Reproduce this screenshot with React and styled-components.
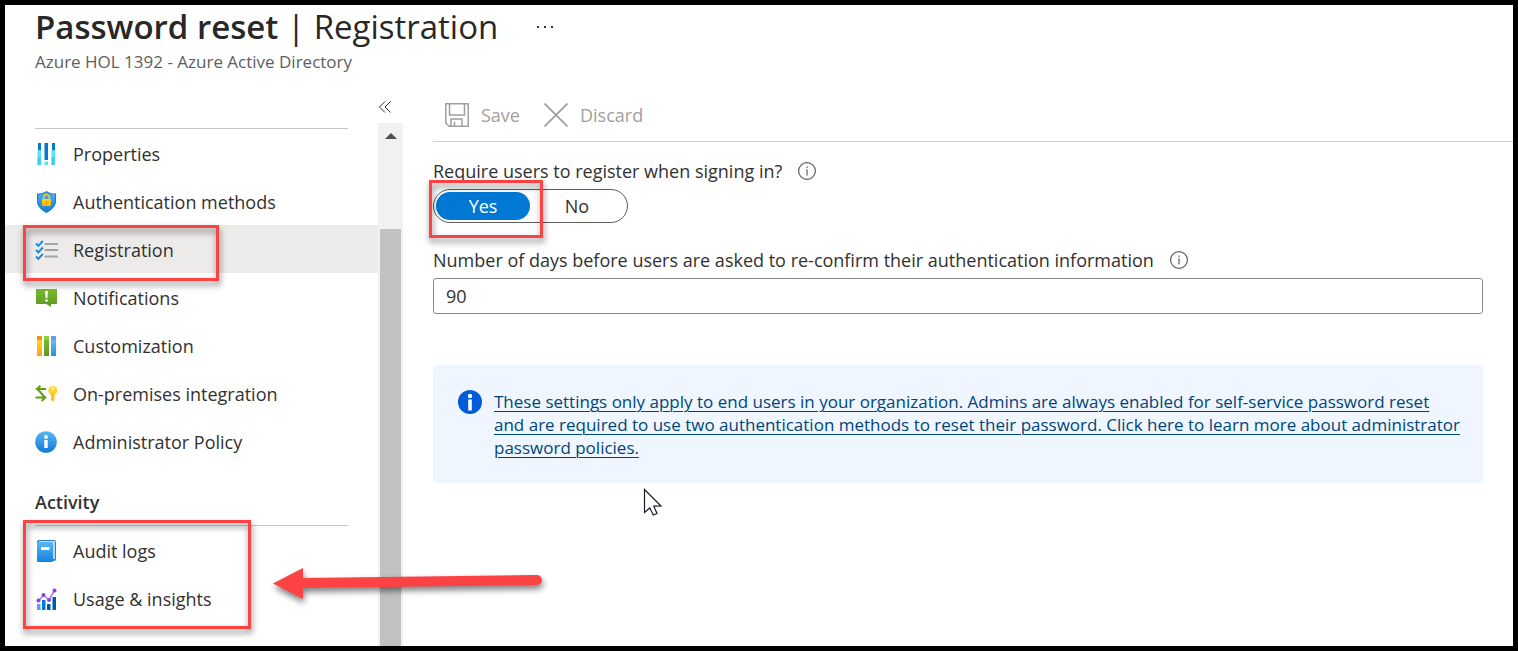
import React, { useState } from "react";
import styled, { createGlobalStyle, css } from "styled-components";

const GlobalStyle = createGlobalStyle`
  *, *::before, *::after { box-sizing: border-box; }
  body {
    margin: 0;
    background: #fff;
    color: #323130;
    font-family: "Open Sans", "Noto Sans", sans-serif;
    font-size: 18px;
    line-height: 24px;
  }
  button, input { font: inherit; color: inherit; }
  svg { display: block; flex: none; }
`;

const Frame = styled.div`
  display: flex;
  flex-direction: column;
  min-height: 100vh;
  border: 5px solid #000;
  overflow: hidden;
`;

const Header = styled.header`
  padding: 0 30px;
  height: 88px;
`;

const TitleRow = styled.div`
  display: flex;
  align-items: center;
  gap: 38px;
  height: 44px;
`;

const Title = styled.h1`
  margin: 0;
  font-size: 33px;
  line-height: 44px;
  font-weight: 400;
  color: #292827;
  white-space: nowrap;

  strong { font-weight: 600; }
`;

const MoreButton = styled.button`
  padding: 0;
  border: 0;
  background: none;
  cursor: pointer;
`;

const Subtitle = styled.p`
  margin: 0;
  font-size: 17px;
  line-height: 26px;
  color: #605e5c;
`;

const Body = styled.div`
  display: flex;
  flex: 1;
`;

const Sidebar = styled.nav`
  display: flex;
  flex: none;
  width: 398px;
`;

const Menu = styled.div`
  flex: 1;
  padding-top: 35px;
`;

const Rule = styled.hr`
  margin: 0 30px;
  border: 0;
  border-top: 1px solid #c8c6c4;
`;

const NavList = styled.ul`
  position: relative;
  margin: 0;
  padding: 0;
  list-style: none;
`;

const NavItem = styled.li`
  position: relative;
`;

const NavLink = styled.a`
  display: flex;
  align-items: center;
  gap: 15px;
  height: 48px;
  padding: 2px 30px 0;
  color: #323130;
  text-decoration: none;
  white-space: nowrap;
  background: ${(p) => (p.$active ? "#edebe9" : "transparent")};
`;

const GroupTitle = styled.h2`
  margin: 0;
  padding: 25px 30px 11px;
  font-size: 18px;
  line-height: 24px;
  font-weight: 600;
`;

const ScrollColumn = styled.div`
  display: flex;
  flex-direction: column;
  width: 25px;
`;

const CollapseButton = styled.button`
  display: flex;
  align-items: center;
  height: 30px;
  padding: 0 0 2px;
  border: 0;
  background: none;
  cursor: pointer;
`;

const Track = styled.div`
  display: flex;
  flex: 1;
  flex-direction: column;
  align-items: center;
  gap: 90px;
  padding: 10px 2px 0;
  background: #f1f1f1;
`;

const Thumb = styled.div`
  flex: 1;
  align-self: stretch;
  background: #c1c1c1;
`;

const Main = styled.main`
  flex: 1;
  min-width: 0;
  padding-left: 30px;
`;

const Toolbar = styled.div`
  display: flex;
  align-items: center;
  gap: 24px;
  height: 49px;
  padding: 0 12px 4px;
  border-bottom: 1px solid #d2d0ce;
`;

const ToolButton = styled.button`
  display: flex;
  align-items: center;
  gap: 12px;
  padding: 0;
  border: 0;
  background: none;
  &:disabled { color: #a19f9d; }
`;

const Form = styled.form`
  padding: 17px 30px 0 0;
`;

const LabelRow = styled.div`
  display: flex;
  align-items: center;
  gap: 16px;
  height: 24px;
  white-space: nowrap;
`;

const Toggle = styled.div`
  position: relative;
  display: flex;
  width: 195px;
  height: 34px;
  margin: 6px 0 25px;
  padding: 2px;
  border: 1px solid #605e5c;
  border-radius: 17px;
`;

const HiddenRadio = styled.input`
  position: absolute;
  opacity: 0;
  width: 1px;
  height: 1px;
  margin: 0;
`;

const Option = styled.label`
  display: flex;
  align-items: center;
  justify-content: center;
  width: 94px;
  border-radius: 14px;
  cursor: pointer;
  ${(p) =>
    p.$checked &&
    css`
      background: #0078d4;
      color: #fff;
    `}
`;

const TextInput = styled.input`
  display: block;
  width: 100%;
  height: 36px;
  margin-top: 6px;
  padding: 0 12px;
  border: 1px solid #8a8886;
  border-radius: 3px;
  background: #fff;
`;

const Notice = styled.aside`
  position: relative;
  display: flex;
  align-items: flex-start;
  gap: 12px;
  margin-top: 51px;
  padding: 25px 20px 24px 24px;
  border-radius: 4px;
  background: #eff6ff;
`;

const NoticeLink = styled.a`
  font-size: 17px;
  line-height: 23px;
  color: #004578;
  text-decoration-thickness: 1px;
  text-underline-offset: 3px;
`;

const Highlight = styled.span`
  position: absolute;
  top: ${(p) => p.$top}px;
  left: ${(p) => p.$left}px;
  width: ${(p) => p.$width}px;
  height: ${(p) => p.$height}px;
  border: 3px solid #fc4343;
  filter: drop-shadow(1px 4px 3px rgba(0, 0, 0, 0.5));
  pointer-events: none;
  z-index: 2;
`;

const ArrowSvg = styled.svg`
  position: absolute;
  top: -16px;
  left: 262px;
  z-index: 2;
  filter: drop-shadow(1px 4px 3px rgba(0, 0, 0, 0.5));
  pointer-events: none;
`;

const PointerSvg = styled.svg`
  position: absolute;
  top: 123px;
  left: 210px;
  pointer-events: none;
`;

const PropertiesIcon = () => (
  <svg width="23" height="24" viewBox="0 0 23 24" aria-hidden="true">
    <path fill="#0078d4" d="M3 1h3v7H3zM9.500 1h3.500v17H9.500zM17 1h3v7h-3z" />
    <path fill="#50e6ff" d="M2.500 8H6v15H2.500zM9.500 19.500H13V23H9.500zM16.500 8H20v15h-3.500z" />
    <path fill="#32bedd" d="M2.500 15H6v8H2.500zM16.500 15H20v8h-3.500z" opacity=".6" />
  </svg>
);

const ShieldIcon = () => (
  <svg width="23" height="24" viewBox="0 0 23 24" aria-hidden="true">
    <defs>
      <linearGradient id="lock" x1="0" y1="0" x2="0" y2="1">
        <stop offset="0" stopColor="#ffd70f" />
        <stop offset="1" stopColor="#feb015" />
      </linearGradient>
      <linearGradient id="shield" x1="0" y1="0" x2="0" y2="1">
        <stop offset="0" stopColor="#54aef0" />
        <stop offset="1" stopColor="#1a80d3" />
      </linearGradient>
    </defs>
    <path fill="#1978c8" d="M11.500 1c2.500 2 5.500 2.400 9.500 2.600v7.400c0 6-5 9.500-9.500 12C7 20.500 2 17 2 11V3.600C6 3.400 9 3 11.500 1z" />
    <path fill="url(#shield)" d="M11.500 2.200c2.400 1.700 5 2.100 8.500 2.300V11c0 5.300-4.400 8.500-8.500 10.800C7.400 19.500 3 16.300 3 11V4.500c3.500-.2 6.100-.6 8.500-2.300z" />
    <path fill="none" stroke="#ffc41a" strokeWidth="1.500" d="M8.700 10V7.400a2.800 2.800 0 0 1 5.600 0V10" />
    <rect x="7" y="9" width="9" height="7" rx="1" fill="url(#lock)" />
    <path stroke="#e58a00" strokeWidth="1.200" d="M11.500 11v3" />
  </svg>
);

const ChecklistIcon = () => (
  <svg width="23" height="24" viewBox="0 0 23 24" aria-hidden="true">
    <path fill="none" stroke="#1b87e0" strokeWidth="2" d="M1 5.500l2.400 2.400L7.800 3M1 12l2.400 2.400L7.800 9.500M1 18.500l2.400 2.400L7.800 16" />
    <path stroke="#a3a3a3" strokeWidth="2.200" strokeLinecap="round" d="M10.500 6H22M10.500 12H22M10.500 18.500H22" />
  </svg>
);

const NotificationIcon = () => (
  <svg width="23" height="24" viewBox="0 0 23 24" aria-hidden="true">
    <defs>
      <linearGradient id="note" x1="0" y1="0" x2="0" y2="1">
        <stop offset="0" stopColor="#76bc2d" />
        <stop offset="1" stopColor="#5e9624" />
      </linearGradient>
    </defs>
    <path fill="url(#note)" d="M1 3h21v15h-6v3l-4.500-3H1z" />
    <path fill="#fff" d="M10 5h3l-.6 7h-1.800z" />
    <circle cx="11.500" cy="14.500" r="1.300" fill="#fff" />
  </svg>
);

const CustomizationIcon = () => (
  <svg width="23" height="24" viewBox="0 0 23 24" aria-hidden="true">
    <defs>
      <linearGradient id="binder-yellow" x1="0" y1="0" x2="0" y2="1">
        <stop offset="0" stopColor="#ffd70f" />
        <stop offset="1" stopColor="#fea11b" />
      </linearGradient>
      <linearGradient id="binder-green" x1="0" y1="0" x2="0" y2="1">
        <stop offset="0" stopColor="#76bc2d" />
        <stop offset="1" stopColor="#5e9624" />
      </linearGradient>
      <linearGradient id="binder-blue" x1="0" y1="0" x2="0" y2="1">
        <stop offset="0" stopColor="#6bb9f2" />
        <stop offset="1" stopColor="#1b93eb" />
      </linearGradient>
    </defs>
    <path fill="url(#binder-yellow)" d="M2 6h5v16H2z" />
    <path fill="#f78d1e" d="M2 2h5v4H2z" />
    <path fill="url(#binder-green)" d="M9 6h5v16H9z" />
    <path fill="#86d633" d="M9 2h5v4H9z" />
    <path fill="url(#binder-blue)" d="M16 6h5v16h-5z" />
    <path fill="#5ea0ef" d="M16 2h5v4h-5z" />
  </svg>
);

const IntegrationIcon = () => (
  <svg width="23" height="24" viewBox="0 0 23 24" aria-hidden="true">
    <path fill="none" stroke="#5ea013" strokeWidth="2" d="M11 7H2.500L10 15.500M5.500 3.800L2 7l3.500 3M.5 15.500H10M7 12.200l3.300 3.300L6.500 19" />
    <circle cx="17.800" cy="8.500" r="4.500" fill="#ffd32b" />
    <path fill="#ffc01e" d="M16 11h3.500v7L18 19.500 16 18z" />
    <circle cx="17.800" cy="6.500" r="1.300" fill="#fff" />
  </svg>
);

const PolicyIcon = () => (
  <svg width="23" height="24" viewBox="0 0 23 24" aria-hidden="true">
    <defs>
      <linearGradient id="policy" x1="0" y1="0" x2="0" y2="1">
        <stop offset="0" stopColor="#5ab5f5" />
        <stop offset="1" stopColor="#0f7bd4" />
      </linearGradient>
    </defs>
    <circle cx="11" cy="12" r="10.800" fill="url(#policy)" />
    <circle cx="11" cy="7" r="1.900" fill="#fff" />
    <path fill="#fff" d="M9.300 10h3.400v8H9.300z" />
  </svg>
);

const LogIcon = () => (
  <svg width="23" height="24" viewBox="0 0 23 24" aria-hidden="true">
    <defs>
      <linearGradient id="book" x1="0" y1="0" x2="0" y2="1">
        <stop offset="0" stopColor="#5ab5f5" />
        <stop offset="1" stopColor="#1583dc" />
      </linearGradient>
    </defs>
    <rect x="2" y="1" width="19" height="21" rx="2" fill="#2b7fc4" />
    <path fill="#b4dcf7" d="M4 2h16v18H4z" />
    <rect x="2" y="3" width="16" height="20" rx="1.500" fill="url(#book)" />
    <path fill="#fff" d="M6 8h8.500v3H6z" />
  </svg>
);

const InsightsIcon = () => (
  <svg width="23" height="24" viewBox="0 0 23 24" aria-hidden="true">
    <path fill="#5ea0ef" d="M2 17h3.500v6H2z" />
    <path fill="#0078d4" d="M7 13h3.500v10H7z" />
    <path fill="#005ba1" d="M12 17h3.500v6H12zM17.500 10H21v13h-3.500z" />
    <path fill="none" stroke="#a67af4" strokeWidth="1.500" d="M3.500 14l5-6 5.500 5 5.500-9.500" />
    <g fill="#8644e0">
      <circle cx="3.500" cy="13.500" r="2" />
      <circle cx="8.500" cy="8" r="2" />
      <circle cx="14" cy="13" r="2" />
      <circle cx="19.500" cy="3.500" r="2" />
    </g>
  </svg>
);

const SaveIcon = () => (
  <svg width="24" height="24" viewBox="0 0 24 24" fill="none" stroke="#a19f9d" strokeWidth="1.500" aria-hidden="true">
    <path d="M.8.800h22.400v22.400H4L.8 20z" />
    <path d="M4.500 1v11h15V1M6 23v-7h11v7M9.500 19v4" />
  </svg>
);

const DiscardIcon = () => (
  <svg width="24" height="24" viewBox="0 0 24 24" fill="none" stroke="#a19f9d" strokeWidth="1.800" aria-hidden="true">
    <path d="M.5.500l23 23M23.500.5l-23 23" />
  </svg>
);

const HintIcon = () => (
  <svg width="18" height="18" viewBox="0 0 18 18" role="img" aria-label="More information">
    <circle cx="9" cy="9" r="8.400" fill="none" stroke="#605e5c" strokeWidth="1.200" />
    <path fill="#605e5c" d="M8.400 4.500h1.200V6H8.400zM8.400 7.300h1.200v6.200H8.400z" />
  </svg>
);

const NoticeIcon = () => (
  <svg width="25" height="24" viewBox="0 0 25 24" aria-hidden="true">
    <circle cx="13" cy="12" r="12" fill="#015cda" />
    <circle cx="13" cy="6" r="2.200" fill="#fff" />
    <path fill="#fff" d="M11.200 9.500h3.600v11h-3.600z" />
  </svg>
);

const settings = [
  { label: "Properties", icon: PropertiesIcon },
  { label: "Authentication methods", icon: ShieldIcon },
  { label: "Registration", icon: ChecklistIcon, active: true },
  { label: "Notifications", icon: NotificationIcon },
  { label: "Customization", icon: CustomizationIcon },
  { label: "On-premises integration", icon: IntegrationIcon },
  { label: "Administrator Policy", icon: PolicyIcon },
];

const activity = [
  { label: "Audit logs", icon: LogIcon },
  { label: "Usage & insights", icon: InsightsIcon },
];

function NavEntry({ label, icon: Icon, active }) {
  return (
    <NavItem>
      <NavLink href="#" $active={active} aria-current={active ? "page" : undefined}>
        <Icon />
        {label}
      </NavLink>
      {active && <Highlight $top={0} $left={18} $width={196} $height={56} />}
    </NavItem>
  );
}

export default function App() {
  const [required, setRequired] = useState("Yes");
  const [days, setDays] = useState("90");

  return (
    <Frame>
      <GlobalStyle />
      <Header>
        <TitleRow>
          <Title>
            <strong>Password reset</strong> | Registration
          </Title>
          <MoreButton type="button" aria-label="More actions">
            <svg width="18" height="4" viewBox="0 0 18 4" fill="#323130">
              <path d="M1 1h2v2H1zM8 1h2v2H8zM15 1h2v2h-2z" />
            </svg>
          </MoreButton>
        </TitleRow>
        <Subtitle>Azure HOL 1392 - Azure Active Directory</Subtitle>
      </Header>

      <Body>
        <Sidebar aria-label="Password reset">
          <Menu>
            <Rule />
            <NavList>
              {settings.map((item) => (
                <NavEntry key={item.label} {...item} />
              ))}
            </NavList>
            <GroupTitle>Activity</GroupTitle>
            <Rule />
            <NavList>
              {activity.map((item) => (
                <NavEntry key={item.label} {...item} />
              ))}
              <Highlight as="li" aria-hidden="true" $top={-6} $left={18} $width={228} $height={109} />
              <li aria-hidden="true">
                <ArrowSvg width="282" height="120" viewBox="0 0 282 120">
                  <path stroke="#fc4343" strokeWidth="10" strokeLinecap="round" d="M36 73l234-3" />
                  <path fill="#fc4343" d="M6 73.500L36 58v31z" />
                </ArrowSvg>
              </li>
            </NavList>
          </Menu>
          <ScrollColumn>
            <CollapseButton type="button" aria-label="Collapse menu">
              <svg width="14" height="12" viewBox="0 0 14 12" fill="none" stroke="#323130">
                <path d="M7 .5L1.500 6 7 11.500M12.500.5L7 6l5.500 5.500" />
              </svg>
            </CollapseButton>
            <Track>
              <svg width="12" height="6" viewBox="0 0 12 6" aria-hidden="true">
                <path fill="#505050" d="M6 0l6 6H0z" />
              </svg>
              <Thumb />
            </Track>
          </ScrollColumn>
        </Sidebar>

        <Main>
          <Toolbar>
            <ToolButton type="button" disabled>
              <SaveIcon />
              Save
            </ToolButton>
            <ToolButton type="button" disabled>
              <DiscardIcon />
              Discard
            </ToolButton>
          </Toolbar>
          <Form onSubmit={(e) => e.preventDefault()}>
            <LabelRow>
              <span id="require-label">Require users to register when signing in?</span>
              <HintIcon />
            </LabelRow>
            <Toggle role="radiogroup" aria-labelledby="require-label">
              {["Yes", "No"].map((value) => (
                <Option key={value} $checked={required === value}>
                  <HiddenRadio
                    type="radio"
                    name="require"
                    value={value}
                    checked={required === value}
                    onChange={() => setRequired(value)}
                  />
                  {value}
                </Option>
              ))}
              <Highlight $top={-10} $left={-5} $width={114} $height={58} />
            </Toggle>
            <LabelRow>
              <label htmlFor="days">
                Number of days before users are asked to re-confirm their authentication information
              </label>
              <HintIcon />
            </LabelRow>
            <TextInput id="days" type="text" value={days} onChange={(e) => setDays(e.target.value)} />
            <Notice>
              <NoticeIcon />
              <NoticeLink href="#">
                These settings only apply to end users in your organization. Admins are always enabled for
                self-service password reset and are required to use two authentication methods to reset their
                password. Click here to learn more about administrator password policies.
              </NoticeLink>
              <PointerSvg width="20" height="30" viewBox="0 0 20 30" aria-hidden="true">
                <path fill="#fff" stroke="#1b1b2b" strokeWidth="1.200" d="M1.500 1.500v23l5.300-4.500 3.500 7 3.700-1.500-3.200-7.300 7.200-.2z" />
              </PointerSvg>
            </Notice>
          </Form>
        </Main>
      </Body>
    </Frame>
  );
}
